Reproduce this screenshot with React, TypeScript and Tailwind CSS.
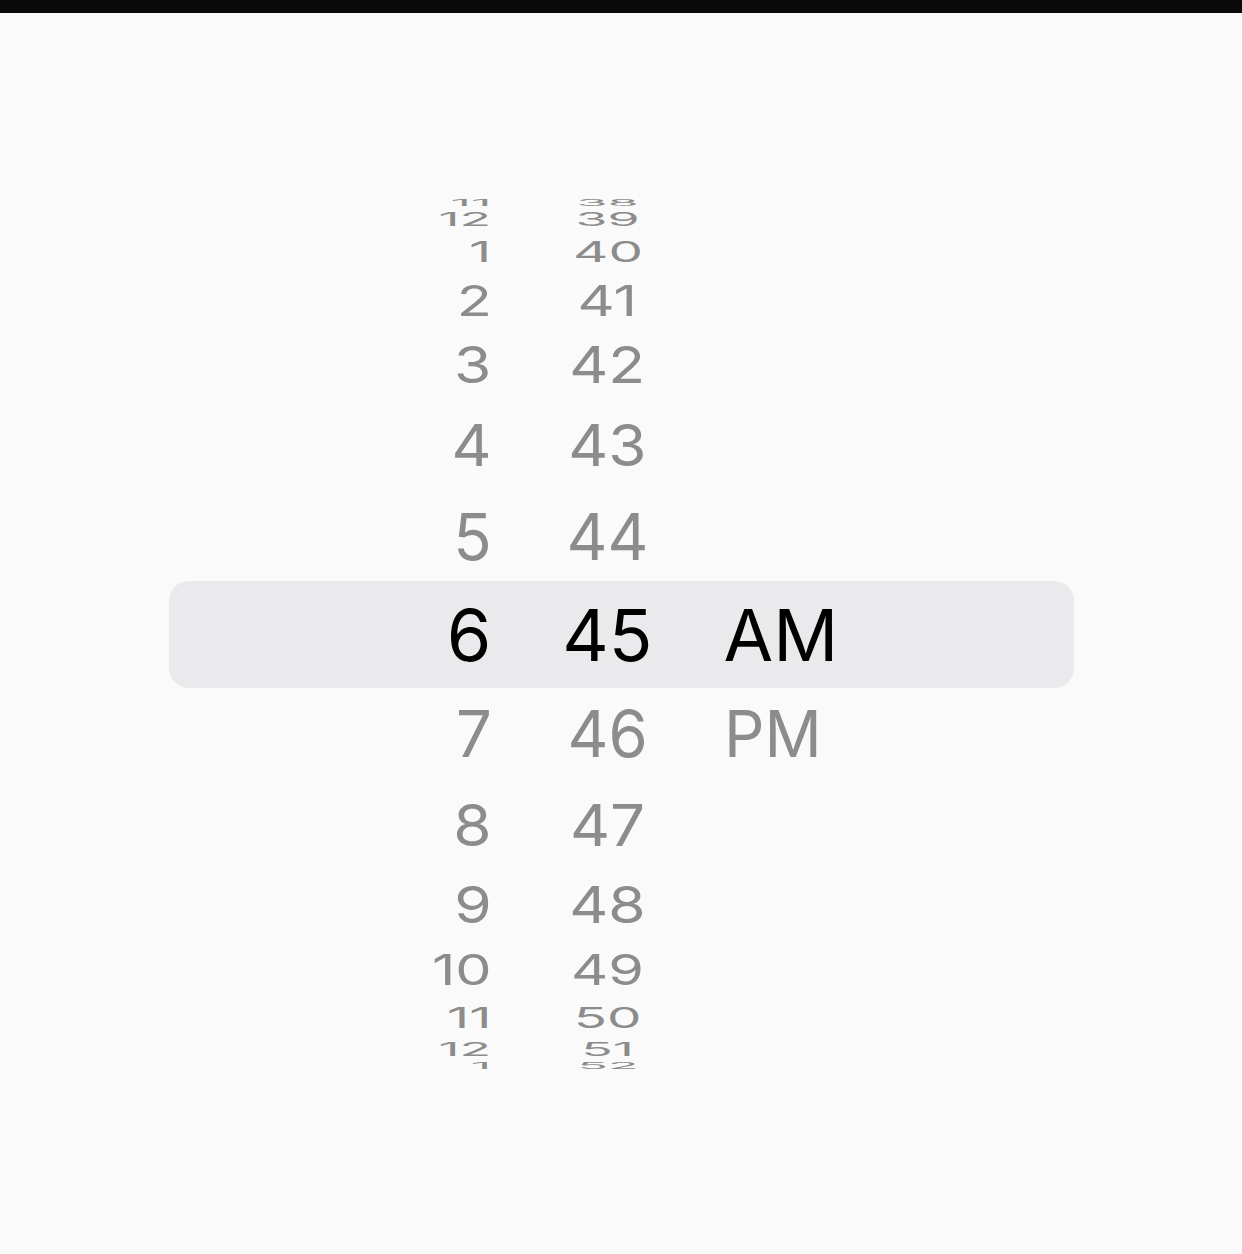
import React from "react";

interface WheelRow {
  offset: number;
  height: number;
  hour: string;
  minute: string;
  period?: string;
}

// squash per distance from the selected row (drum perspective)
const scaleY = [1, 0.9, 0.81, 0.71, 0.58, 0.4, 0.25, 0.12];
const scaleX = [1, 0.88, 0.86, 0.84, 0.8, 0.76, 0.72, 0.7];

const rows: WheelRow[] = [
  { offset: -7, height: 1, hour: "11", minute: "38" },
  { offset: -6, height: 31, hour: "12", minute: "39" },
  { offset: -5, height: 35, hour: "1", minute: "40" },
  { offset: -4, height: 63, hour: "2", minute: "41" },
  { offset: -3, height: 65, hour: "3", minute: "42" },
  { offset: -2, height: 95, hour: "4", minute: "43" },
  { offset: -1, height: 89, hour: "5", minute: "44" },
  { offset: 0, height: 107, hour: "6", minute: "45", period: "AM" },
  { offset: 1, height: 91, hour: "7", minute: "46", period: "PM" },
  { offset: 2, height: 91, hour: "8", minute: "47" },
  { offset: 3, height: 69, hour: "9", minute: "48" },
  { offset: 4, height: 61, hour: "10", minute: "49" },
  { offset: 5, height: 35, hour: "11", minute: "50" },
  { offset: 6, height: 27, hour: "12", minute: "51" },
  { offset: 7, height: 7, hour: "1", minute: "52" },
];

const Cell: React.FC<{ text?: string; k: number; origin: string; className: string }> = ({
  text,
  k,
  origin,
  className,
}) => {
  const d = Math.abs(k);
  return (
    <div className={className}>
      {text && (
        <span
          className="block leading-none whitespace-nowrap"
          style={{ transform: `scale(${scaleX[d]}, ${scaleY[d]})`, transformOrigin: origin }}
        >
          {text}
        </span>
      )}
    </div>
  );
};

const TimePickerPage: React.FC = () => {
  return (
    <div className="min-h-[1254px] w-full bg-[#fafafa] font-['Inter','Liberation_Sans',sans-serif]">
      <div className="h-[13px] w-full bg-[#0a0a0a]" />
      <div className="pt-[189px] flex justify-center">
        <div className="w-[905px] flex flex-col">
          {rows.map((row) => {
            const selected = row.offset === 0;
            return (
              <div
                key={row.offset}
                style={{ height: row.height }}
                className={
                  "flex items-center pl-[203px] text-[72px] " +
                  (selected ? "bg-[#eaeaec] rounded-[20px] text-black" : "text-[#8c8c8c]")
                }
              >
                <Cell
                  text={row.hour}
                  k={row.offset}
                  origin="right center"
                  className="w-[120px] flex justify-end"
                />
                <Cell
                  text={row.minute}
                  k={row.offset}
                  origin="center center"
                  className="w-[116px] ml-[58px] flex justify-center"
                />
                <Cell
                  text={row.period}
                  k={row.offset}
                  origin="left center"
                  className="w-[140px] ml-[58px] flex justify-start"
                />
              </div>
            );
          })}
        </div>
      </div>
    </div>
  );
};

export default TimePickerPage;
